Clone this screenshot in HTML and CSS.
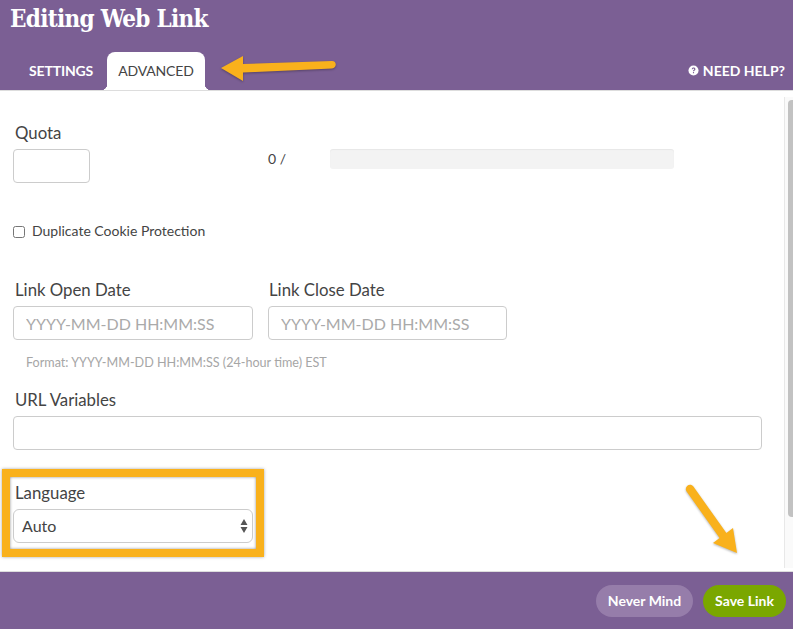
FILE: index.html
```html
<!DOCTYPE html>
<html lang="en">
<head>
  <meta charset="UTF-8">
  <title>Editing Web Link</title>
  <link rel="stylesheet" href="styles.css">
</head>
<body>

  <div class="header">
    <h1>Editing Web Link</h1>
    <div class="tabs">
      <a class="tab">SETTINGS</a>
      <a class="tab active">ADVANCED</a>
      <a class="help">
        <svg class="help-icon" viewBox="0 0 12 12"><circle cx="6" cy="6" r="5.5" fill="#fff"/><path d="M4.1 4.7c0-1.2.9-1.9 2-1.9s2 .7 2 1.7c0 1.4-1.5 1.3-1.5 2.4H5.4c0-1.6 1.4-1.5 1.4-2.3 0-.4-.3-.7-.8-.7s-.8.3-.8.8z" fill="#7b5f94"/><rect x="5.4" y="7.7" width="1.2" height="1.3" fill="#7b5f94"/></svg>
        NEED HELP?
      </a>
    </div>
  </div>

  <div class="content">
    <div class="form">
      <label class="label">Quota</label>
      <div class="quota-row">
        <input class="input input-quota" type="text">
        <span class="quota-count">0 /</span>
        <div class="quota-bar"></div>
      </div>

      <label class="check-row">
        <input class="check" type="checkbox">
        Duplicate Cookie Protection
      </label>

      <div class="date-row">
        <div>
          <label class="label">Link Open Date</label>
          <input class="input input-date" type="text" placeholder="YYYY-MM-DD HH:MM:SS">
        </div>
        <div class="date-close">
          <label class="label">Link Close Date</label>
          <input class="input input-date" type="text" placeholder="YYYY-MM-DD HH:MM:SS">
        </div>
      </div>
      <div class="hint">Format: YYYY-MM-DD HH:MM:SS (24-hour time) EST</div>

      <label class="label label-url">URL Variables</label>
      <input class="input input-url" type="text">

      <label class="label label-language">Language</label>
      <div class="select">
        Auto
        <svg class="select-arrows" viewBox="0 0 8 14"><path d="M4 0l3.5 6H.5zM4 14L.5 8h7z" fill="#555"/></svg>
      </div>
    </div>
    <div class="scrollbar"><div class="scrollbar-thumb"></div></div>
  </div>

  <div class="footer">
    <button class="btn btn-cancel">Never Mind</button>
    <button class="btn btn-save">Save Link</button>
  </div>

  <!-- annotations on top of the screenshot -->
  <div class="highlight"></div>
  <svg class="arrow arrow-tab" viewBox="0 0 120 34">
    <path d="M1 14L23 2v8l89-3c5 0 5 7 0 7.500l-89 4v8.500z" fill="#f9b11c"/>
  </svg>
  <svg class="arrow arrow-save" viewBox="0 0 56 70">
    <path d="M2.600 7.500L35.600 54 29 59 53 69 49 44 42.400 49 9.400 2.500C6 -2 -0.500 3 2.600 7.500z" fill="#f9b11c"/>
  </svg>

</body>
</html>
```

FILE: styles.css
```css
* {
  box-sizing: border-box;
}

body {
  margin: 0;
  width: 793px;
  height: 629px;
  overflow: hidden;
  position: relative;
  background: white;
  font-family: Lato, sans-serif;
  color: #444;
  display: flex;
  flex-direction: column;
}

.header {
  background: #7b5f94;
  height: 91px;
  border-bottom: 1px solid #ddd;
  padding: 0 0 0 10px;
  display: flex;
  flex-direction: column;
  justify-content: space-between;
}

h1 {
  margin: 0;
  padding-top: 4px;
  font-family: "DejaVu Serif", serif;
  font-stretch: condensed;
  font-size: 24px;
  line-height: 30px;
  font-weight: bold;
  letter-spacing: -0.7px;
  color: white;
}

.tabs {
  display: flex;
  align-items: flex-end;
  height: 38px;
  padding-left: 8px;
}

.tab {
  height: 38px;
  padding: 10px 11px 0;
  font-size: 14px;
  line-height: 17px;
  font-weight: bold;
  letter-spacing: -0.15px;
  color: white;
}

.tab.active {
  position: relative;
  background: white;
  color: #444;
  font-weight: normal;
  border-radius: 8px 8px 0 0;
  margin-left: 3px;
}

/* flared bottom corners of the open tab */
.tab.active::before,
.tab.active::after {
  content: "";
  position: absolute;
  bottom: 0;
  width: 6px;
  height: 6px;
}

.tab.active::before {
  left: -6px;
  background: radial-gradient(circle at 0 0, #7b5f94 6px, white 6.5px);
}

.tab.active::after {
  right: -6px;
  background: radial-gradient(circle at 100% 0, #7b5f94 6px, white 6.5px);
}

.help {
  margin-left: auto;
  margin-right: 8px;
  margin-bottom: 11px;
  font-size: 14px;
  line-height: 17px;
  font-weight: bold;
  color: white;
  display: flex;
  align-items: center;
  gap: 4px;
}

.help-icon {
  width: 11px;
  height: 11px;
}

.content {
  flex: 1;
  display: flex;
  justify-content: space-between;
  min-height: 0;
}

.form {
  width: 784px;
  padding: 32px 0 0 13px;
}

.label {
  display: block;
  font-size: 16.8px;
  line-height: 20px;
  padding-left: 2px;
  margin-bottom: 6px;
  color: #444;
}

.input {
  display: block;
  height: 34px;
  border: 1px solid #ccc;
  border-radius: 4px;
  background: white;
  font-family: Lato, sans-serif;
  font-size: 16px;
  padding: 0 12px;
}

.input::placeholder {
  color: #aaa;
  opacity: 1;
}

.quota-row {
  display: flex;
  align-items: flex-start;
}

.input-quota {
  width: 77px;
}

.quota-count {
  margin-left: 178px;
  width: 62px;
  font-size: 14px;
  line-height: 20px;
}

.quota-bar {
  width: 344px;
  height: 20px;
  background: #f3f3f3;
  border-radius: 3px;
  box-shadow: inset 0 1px 1px rgba(0, 0, 0, 0.05);
}

.check-row {
  display: flex;
  align-items: center;
  gap: 7px;
  margin-top: 39px;
  font-size: 14px;
  line-height: 18px;
}

.check {
  width: 12px;
  height: 12px;
  margin: 2px 0 0;
}

.date-row {
  display: flex;
  gap: 15px;
  margin-top: 40px;
}

.input-date {
  width: 240px;
}

.date-close .label {
  padding-left: 1px;
}

.date-close .input-date {
  width: 239px;
}

.hint {
  margin: 15px 0 0 13px;
  font-size: 12.6px;
  line-height: 16px;
  color: #a6a6a6;
}

.label-url {
  margin-top: 19px;
}

.input-url {
  width: 749px;
}

.label-language {
  margin-top: 33px;
}

.select {
  position: relative;
  width: 240px;
  height: 34px;
  border: 1px solid #ccc;
  border-radius: 6px;
  padding-left: 8px;
  font-size: 16px;
  line-height: 32px;
}

.select-arrows {
  position: absolute;
  right: 4px;
  top: 9px;
  width: 8px;
  height: 14px;
}

.scrollbar {
  width: 9px;
  margin: 6px 0 3px;
  background: #fafafa;
  border-left: 1px solid #e8e8e8;
  padding-top: 3px;
}

.scrollbar-thumb {
  height: 417px;
  background: #c2c2c2;
  border-radius: 4px 0 0 4px;
  margin-left: 3px;
}

.footer {
  height: 58px;
  background: #7b5f94;
  border-top: 1px solid #ddd;
  display: flex;
  justify-content: flex-end;
  align-items: center;
  gap: 10px;
  padding: 0 7px 0 0;
}

.btn {
  height: 32px;
  border: none;
  border-radius: 16px;
  color: white;
  font-family: Lato, sans-serif;
  font-size: 14px;
  font-weight: bold;
}

.btn-cancel {
  width: 97px;
  background: #967daa;
}

.btn-save {
  width: 83px;
  background: #7aa700;
}

.highlight {
  position: absolute;
  left: 2px;
  top: 469px;
  width: 262px;
  height: 88px;
  border: 8px solid #f9b11c;
  box-shadow: 0 0 3px rgba(0, 0, 0, 0.35), inset 0 0 3px rgba(0, 0, 0, 0.45);
}

.arrow {
  position: absolute;
  filter: drop-shadow(0 1px 1px rgba(0, 0, 0, 0.3));
}

.arrow-tab {
  left: 220px;
  top: 54px;
  width: 120px;
  height: 34px;
}

.arrow-save {
  left: 684px;
  top: 484px;
  width: 56px;
  height: 70px;
}
```
